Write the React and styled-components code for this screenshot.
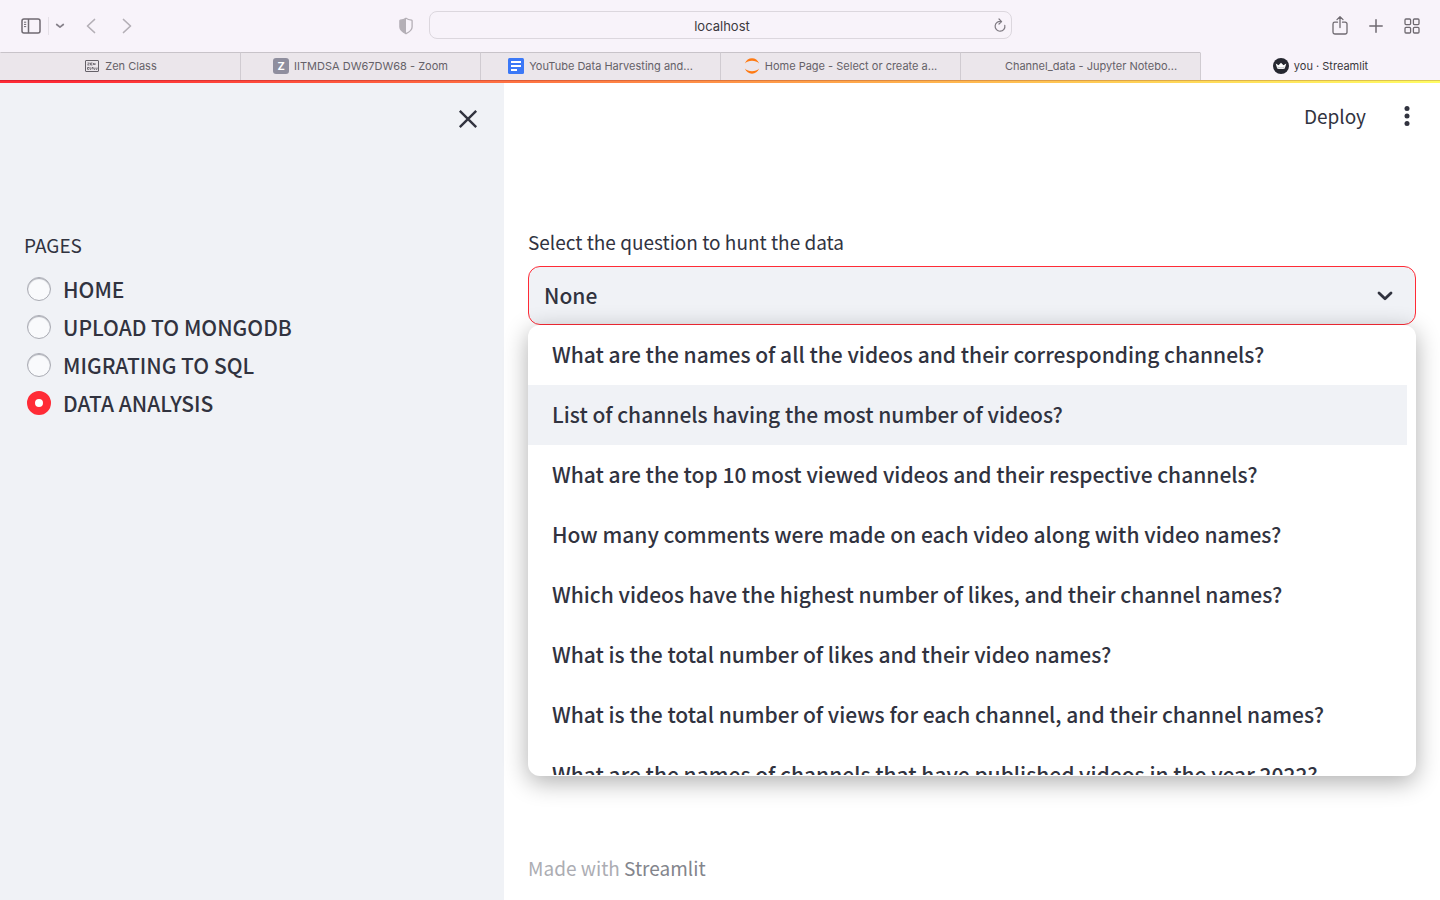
import React, { useState } from "react";
import styled, { createGlobalStyle } from "styled-components";

const GlobalStyle = createGlobalStyle`
  *, *::before, *::after { box-sizing: border-box; }
  html, body { margin: 0; padding: 0; }
  body {
    background: #ffffff;
    color: #31333f;
    font-family: "Noto Sans CJK SC", "Open Sans", sans-serif;
  }
  button, input, select { font: inherit; color: inherit; }
`;

const Page = styled.div`
  display: flex;
  flex-direction: column;
  min-height: 100vh;
`;

const Toolbar = styled.header`
  display: grid;
  grid-template-columns: 1fr minmax(0, 583px) 1fr;
  align-items: center;
  height: 52px;
  background: #f8f3fa;
  font-family: Inter, sans-serif;
`;

const ToolGroup = styled.div`
  display: flex;
  align-items: center;
  padding: 0 20px;
`;

const StartTools = styled(ToolGroup)`
  padding: 0 14px 0 21px;
`;

const EndTools = styled(ToolGroup)`
  justify-content: flex-end;
  padding: 0 18px;
  gap: 16px;
`;

const Divider = styled.span`
  width: 1px;
  height: 18px;
  margin: 0 3px 0 7px;
  background: #e5e0e7;
`;

const IconButton = styled.button`
  display: flex;
  align-items: center;
  justify-content: center;
  flex: none;
  width: ${(p) => p.$size || 20}px;
  height: ${(p) => p.$size || 20}px;
  margin-left: ${(p) => p.$before || 0}px;
  padding: 0;
  border: 0;
  background: none;
  color: ${(p) => p.$color || "#6f6a71"};
  cursor: pointer;
`;

const ShieldButton = styled(IconButton)`
  margin-left: auto;
`;

const AddressBar = styled.div`
  display: flex;
  align-items: center;
  height: 28px;
  margin-bottom: 2px;
  padding: 0 1px 0 25px;
  border: 1px solid #dcd7de;
  border-radius: 8px;
`;

const AddressInput = styled.input`
  flex: 1;
  min-width: 0;
  height: 26px;
  padding: 2px 0 0;
  border: 0;
  outline: 0;
  background: none;
  text-align: center;
  font-size: 13px;
  color: #3c393e;
`;

const TabBar = styled.nav`
  display: grid;
  grid-template-columns: repeat(6, minmax(0, 1fr));
  height: 28px;
  background: #f8f3fa;
  font-family: Inter, sans-serif;
`;

const Tab = styled.a`
  display: flex;
  align-items: center;
  justify-content: center;
  gap: 5px;
  min-width: 0;
  padding-bottom: 1px;
  color: ${(p) => (p.$active ? "#3a373c" : "#656168")};
  background: ${(p) => (p.$active ? "#f8f3fa" : "#ebe6eb")};
  border-top: 1px solid ${(p) => (p.$active ? "#f8f3fa" : "#c8c3c9")};
  border-left: 1px solid #d0cbd1;
  font-size: 11px;
  line-height: 16px;
  text-decoration: none;
  white-space: nowrap;

  &:first-child {
    border-left-color: #ebe6eb;
  }
`;

const TabIcon = styled.span`
  display: flex;
  flex: none;
  width: 16px;
  height: 16px;
`;

const ProgressLine = styled.div`
  height: 3px;
  border-top: 1px solid rgba(90, 0, 20, 0.2);
  background: linear-gradient(90deg, #ff2b36 0%, #ff2b36 4%, #ffa94b 60%, #fffd62 100%) border-box;
`;

const Body = styled.div`
  flex: 1;
  display: grid;
  grid-template-columns: 35% minmax(0, 1fr);
`;

const Sidebar = styled.aside`
  padding: 24px;
  background: #f0f2f6;
`;

const SidebarTop = styled.div`
  display: flex;
  justify-content: flex-end;
  height: 123px;
`;

const PageGroup = styled.fieldset`
  margin: 0;
  padding: 0;
  border: 0;
`;

const PageLegend = styled.legend`
  padding: 0;
  margin-bottom: 10px;
  font-size: 19px;
  line-height: 30px;
`;

const PageOption = styled.label`
  display: flex;
  align-items: center;
  gap: 12px;
  height: 38px;
  padding-left: 3px;
  font-size: 21px;
  font-weight: 500;
  line-height: 38px;
  cursor: pointer;
`;

const Radio = styled.input`
  appearance: none;
  flex: none;
  width: 24px;
  height: 24px;
  margin: 0;
  border: 1px solid #a9abb3;
  border-radius: 50%;
  background: #f9fafc;
  box-shadow: inset 0 1px 1px #a9abb3;
  cursor: pointer;

  &:checked {
    border: 8px solid #ff2b36;
    background: #ffffff;
    box-shadow: none;
  }
`;

const Main = styled.main`
  display: flex;
  flex-direction: column;
  padding: 15px 24px 16px;
`;

const AppHeader = styled.div`
  display: flex;
  justify-content: flex-end;
  align-items: center;
  gap: 32px;
  height: 36px;
`;

const DeployButton = styled.button`
  padding: 0;
  border: 0;
  background: none;
  font-size: 19px;
  line-height: 36px;
  cursor: pointer;
`;

const MenuButton = styled(IconButton)`
  width: 18px;
`;

const Field = styled.div`
  position: relative;
  margin-top: 92px;
`;

const FieldLabel = styled.label`
  display: block;
  height: 40px;
  font-size: 19px;
  line-height: 32px;
`;

const SelectBox = styled.div`
  display: grid;
  align-items: center;
  height: 59px;
  border: 1px solid #ff2b36;
  border-radius: 12px;
  background: #f0f2f6;
`;

const Select = styled.select`
  grid-area: 1 / 1;
  appearance: none;
  width: 100%;
  height: 57px;
  padding: 0 48px 2px 15px;
  border: 0;
  border-radius: 12px;
  outline: 0;
  background: none;
  font-size: 21px;
  font-weight: 500;
`;

const SelectArrow = styled.svg`
  grid-area: 1 / 1;
  justify-self: end;
  margin-right: 22px;
  pointer-events: none;
`;

const Popover = styled.div`
  position: absolute;
  top: 100%;
  left: 0;
  right: 0;
  padding-bottom: 1px;
  border-radius: 12px;
  background: #ffffff;
  box-shadow: 0 6px 24px rgba(0, 0, 0, 0.32);
  overflow: hidden;
`;

const OptionList = styled.ul`
  height: 450px;
  margin: 0;
  padding: 0 9px 0 0;
  list-style: none;
  overflow: hidden;
`;

const Option = styled.li`
  height: 60px;
  padding: 0 24px;
  background: ${(p) => (p.$highlighted ? "#f0f2f6" : "transparent")};
  font-size: 21px;
  font-weight: 500;
  line-height: 58px;
  white-space: nowrap;
  cursor: pointer;
`;

const Footer = styled.footer`
  margin-top: auto;
  font-size: 19px;
  line-height: 32px;
  color: #acadb3;
`;

const FooterLink = styled.a`
  color: #83858c;
  text-decoration: none;
`;

const pages = ["HOME", "UPLOAD TO MONGODB", "MIGRATING TO SQL", "DATA ANALYSIS"];

const questions = [
  "What are the names of all the videos and their corresponding channels?",
  "List of channels having the most number of videos?",
  "What are the top 10 most viewed videos and their respective channels?",
  "How many comments were made on each video along with video names?",
  "Which videos have the highest number of likes, and their channel names?",
  "What is the total number of likes and their video names?",
  "What is the total number of views for each channel, and their channel names?",
  "What are the names of channels that have published videos in the year 2022?",
];

const ZenIcon = () => (
  <svg width="16" height="16" viewBox="0 0 16 16" fill="none" stroke="#656168">
    <rect x="1.5" y="2.5" width="13" height="11" rx="0.5" />
    <path d="M3.5 5h2L3.5 7h2M8.5 5h-2v2h2M6.5 6h1.500M9.500 7V5l1.500 2V5" strokeWidth="0.8" />
    <path d="M5 9.500H3.500v1.800H5M6 9v2.300h1M8 11.300V9.500h1.200v1.800M10 11.300h1v-1.800M12 11.300h1V9.500" strokeWidth="0.9" />
  </svg>
);

const BadgeZ = styled.span`
  width: 16px;
  height: 16px;
  border-radius: 3px;
  background: #8f8e9e;
  color: #ffffff;
  font-size: 11px;
  font-weight: 700;
  line-height: 16px;
  text-align: center;
`;

const DocsIcon = () => (
  <svg width="16" height="16" viewBox="0 0 16 16">
    <rect width="16" height="16" rx="1.500" fill="#3b78f7" />
    <path d="M3 4h10M3 8h10M3 12h6" stroke="#fff" strokeWidth="2" />
  </svg>
);

const JupyterIcon = () => (
  <svg width="16" height="16" viewBox="0 0 16 16" fill="#ff7a12">
    <path d="M.8 5.500C2.300 2.200 4.800.3 8 .3s5.700 1.900 7.200 5.200C13.300 3.700 10.900 2.800 8 2.800S2.700 3.700.8 5.500Z" />
    <path d="M.8 10.500c1.500 3.300 4 5.200 7.200 5.200s5.700-1.900 7.200-5.200c-1.900 1.800-4.300 2.700-7.200 2.700s-5.300-.9-7.200-2.700Z" />
  </svg>
);

const CrownIcon = () => (
  <svg width="16" height="16" viewBox="0 0 16 16">
    <circle cx="8" cy="8" r="8" fill="#262730" />
    <path d="M2.700 5.600 5.500 7.300 8 4.700l2.500 2.600 2.800-1.700-1.500 4.800c-2.200.9-5.400.9-7.600 0Z" fill="#fff" />
    <path d="M4.200 8.600c2.400.9 5.200.9 7.600 0l-.5 1.500c-2 .6-4.600.6-6.600 0Z" fill="#c9cacf" />
  </svg>
);

const tabs = [
  { title: "Zen Class", icon: <ZenIcon /> },
  { title: "IITMDSA DW67DW68 - Zoom", icon: <BadgeZ aria-hidden="true">Z</BadgeZ> },
  { title: "YouTube Data Harvesting and...", icon: <DocsIcon /> },
  { title: "Home Page - Select or create a...", icon: <JupyterIcon /> },
  { title: "Channel_data - Jupyter Notebo...", icon: null },
  { title: "you · Streamlit", icon: <CrownIcon />, active: true },
];

function BrowserToolbar() {
  return (
    <Toolbar>
      <StartTools>
        <IconButton aria-label="Show sidebar">
          <svg width="20" height="16" viewBox="0 0 20 16" fill="none" stroke="currentColor" strokeWidth="1.500">
            <rect x="1" y="1" width="18" height="14" rx="2" />
            <path d="M7.500 1v14" />
            <path d="M3 4.200h2.200M3 6.400h2.200M3 8.600h2.200" strokeWidth="1" />
          </svg>
        </IconButton>
        <Divider />
        <IconButton $size={16} $color="#86818a" aria-label="Tab groups">
          <svg width="10" height="6" viewBox="0 0 10 6" fill="none" stroke="currentColor" strokeWidth="1.700" strokeLinecap="round" strokeLinejoin="round">
            <path d="M1.700 1.500 5 4.200l3.300-2.700" />
          </svg>
        </IconButton>
        <IconButton $before={13} $color="#b4afb6" aria-label="Back">
          <svg width="10" height="16" viewBox="0 0 10 16" fill="none" stroke="currentColor" strokeWidth="1.700" strokeLinecap="round" strokeLinejoin="round">
            <path d="M8.500 1.500 1.500 8l7 6.500" />
          </svg>
        </IconButton>
        <IconButton $before={16} $color="#b4afb6" aria-label="Forward">
          <svg width="10" height="16" viewBox="0 0 10 16" fill="none" stroke="currentColor" strokeWidth="1.700" strokeLinecap="round" strokeLinejoin="round">
            <path d="m1.500 1.500 7 6.500-7 6.500" />
          </svg>
        </IconButton>
        <ShieldButton $size={18} $color="#b4afb6" aria-label="Privacy report">
          <svg width="14" height="18" viewBox="0 0 14 18">
            <path d="M7 1.200c1.500 1 3.300 1.600 5.600 1.900.3.100.5.300.5.600V10c0 3-2.700 5-6.100 6.700C3.600 15 .9 13 .9 10V3.700c0-.3.200-.5.500-.6C3.700 2.800 5.500 2.200 7 1.200Z" fill="none" stroke="currentColor" strokeWidth="1.300" />
            <path d="M7 1.200v15.500C3.600 15 .9 13 .9 10V3.200C3.700 2.800 5.500 2.200 7 1.200Z" fill="currentColor" />
          </svg>
        </ShieldButton>
      </StartTools>
      <AddressBar>
        <AddressInput aria-label="Address" defaultValue="localhost" />
        <IconButton aria-label="Reload" $color="#7d7880">
          <svg width="14" height="16" viewBox="0 0 14 16" fill="none" stroke="currentColor" strokeWidth="1.200" strokeLinecap="round" strokeLinejoin="round">
            <path d="M11.800 8.300A4.900 4.900 0 1 1 8.300 4.600M6 2l2.600 2.600L6 7" />
          </svg>
        </IconButton>
      </AddressBar>
      <EndTools>
        <IconButton aria-label="Share">
          <svg width="16" height="20" viewBox="0 0 16 20" fill="none" stroke="currentColor" strokeWidth="1.300" strokeLinecap="round" strokeLinejoin="round">
            <path d="M5.500 6.200H2.800A1.800 1.800 0 0 0 1 8v8.200a1.800 1.800 0 0 0 1.800 1.800h10.400a1.800 1.800 0 0 0 1.800-1.800V8a1.800 1.800 0 0 0-1.800-1.800h-2.700M8 11.500V1M5 3.600l3-2.900 3 2.900" />
          </svg>
        </IconButton>
        <IconButton aria-label="New tab">
          <svg width="14" height="14" viewBox="0 0 14 14" fill="none" stroke="currentColor" strokeWidth="1.500" strokeLinecap="round">
            <path d="M7 .8v12.400M.8 7h12.400" />
          </svg>
        </IconButton>
        <IconButton aria-label="Tab overview">
          <svg width="16" height="16" viewBox="0 0 16 16" fill="none" stroke="currentColor" strokeWidth="1.300">
            <rect x="1" y="1" width="5.600" height="5.600" rx="1" />
            <rect x="9.400" y="1" width="5.600" height="5.600" rx="1" />
            <rect x="1" y="9.400" width="5.600" height="5.600" rx="1" />
            <rect x="9.400" y="9.400" width="5.600" height="5.600" rx="1" />
          </svg>
        </IconButton>
      </EndTools>
    </Toolbar>
  );
}

export default function App() {
  const [page, setPage] = useState("DATA ANALYSIS");
  const [answer, setAnswer] = useState("None");
  const [highlighted, setHighlighted] = useState(1);

  return (
    <Page>
      <GlobalStyle />
      <BrowserToolbar />
      <TabBar aria-label="Tabs">
        {tabs.map((tab) => (
          <Tab key={tab.title} href="#" $active={tab.active}>
            <TabIcon>{tab.icon}</TabIcon>
            {tab.title}
          </Tab>
        ))}
      </TabBar>
      <ProgressLine />
      <Body>
        <Sidebar>
          <SidebarTop>
            <IconButton $size={24} $color="#31333f" aria-label="Close sidebar">
              <svg width="20" height="20" viewBox="0 0 20 20" fill="none" stroke="currentColor" strokeWidth="2.400">
                <path d="m1.800 1.800 16.400 16.400M18.200 1.800 1.800 18.200" />
              </svg>
            </IconButton>
          </SidebarTop>
          <PageGroup>
            <PageLegend>PAGES</PageLegend>
            {pages.map((name) => (
              <PageOption key={name}>
                <Radio type="radio" name="page" checked={page === name} onChange={() => setPage(name)} />
                {name}
              </PageOption>
            ))}
          </PageGroup>
        </Sidebar>
        <Main>
          <AppHeader>
            <DeployButton>Deploy</DeployButton>
            <MenuButton $color="#31333f" aria-label="Main menu">
              <svg width="6" height="20" viewBox="0 0 6 20" fill="currentColor">
                <circle cx="3" cy="2.500" r="2.500" />
                <circle cx="3" cy="10" r="2.500" />
                <circle cx="3" cy="17.500" r="2.500" />
              </svg>
            </MenuButton>
          </AppHeader>
          <Field>
            <FieldLabel htmlFor="question">Select the question to hunt the data</FieldLabel>
            <SelectBox>
              <Select id="question" value={answer} onChange={(e) => setAnswer(e.target.value)}>
                <option>None</option>
                {questions.map((q) => (
                  <option key={q}>{q}</option>
                ))}
              </Select>
              <SelectArrow width="16" height="10" viewBox="0 0 16 10" fill="none" stroke="#31333f" strokeWidth="2.800" strokeLinecap="round" strokeLinejoin="round">
                <path d="M2 2 8 7.800 14 2" />
              </SelectArrow>
            </SelectBox>
            <Popover>
              <OptionList role="listbox" aria-label="Questions">
                {questions.map((q, i) => (
                  <Option
                    key={q}
                    role="option"
                    aria-selected={answer === q}
                    $highlighted={i === highlighted}
                    onMouseEnter={() => setHighlighted(i)}
                    onClick={() => setAnswer(q)}
                  >
                    {q}
                  </Option>
                ))}
              </OptionList>
            </Popover>
          </Field>
          <Footer>
            Made with <FooterLink href="#">Streamlit</FooterLink>
          </Footer>
        </Main>
      </Body>
    </Page>
  );
}
